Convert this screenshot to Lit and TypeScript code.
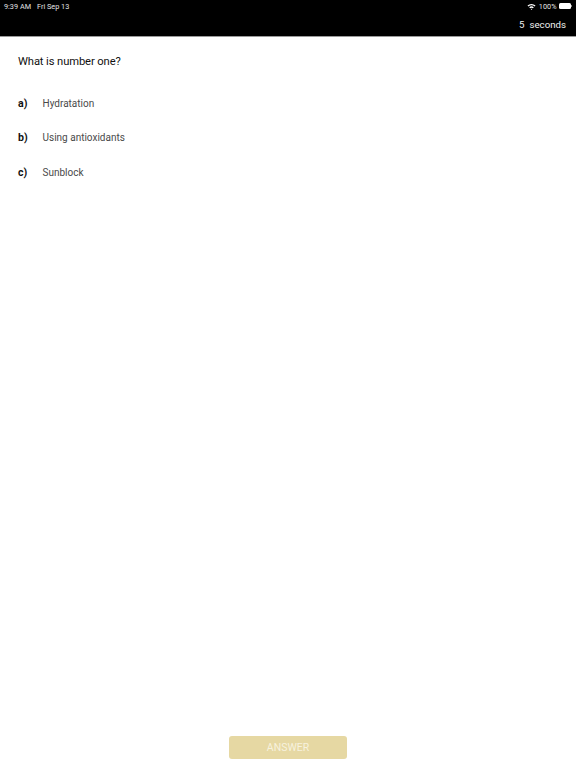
import { LitElement, html, css } from "lit";
import { customElement } from "lit/decorators.js";

const OPTIONS = [
  ["a)", "Hydratation"],
  ["b)", "Using antioxidants"],
  ["c)", "Sunblock"],
];

@customElement("app-root")
export class AppRoot extends LitElement {
  static styles = css`
    :host {
      display: flex;
      flex-direction: column;
      height: 768px;
      background: #fff;
      font-family: Roboto, "Liberation Sans", sans-serif;
      overflow: hidden;
    }
    .header {
      background: #000;
      color: #fff;
      height: 36px;
      border-bottom: 1px solid #9a9a9a;
      box-sizing: content-box;
      display: flex;
      flex-direction: column;
    }
    .status {
      height: 12px;
      display: flex;
      justify-content: space-between;
      align-items: center;
      padding: 0 4px 0 4px;
      font-size: 7.3px;
      color: #e4e4e4;
    }
    .status-left { display: flex; gap: 6px; }
    .status-right { display: flex; align-items: center; gap: 2.5px; }
    .timer {
      display: flex;
      justify-content: flex-end;
      gap: 5px;
      padding: 7px 10px 0 0;
      font-size: 9.7px;
      line-height: 11px;
      color: #f2f2f2;
    }
    .battery { display: flex; align-items: center; }
    .battery-body { width: 12px; height: 6px; background: #fff; border-radius: 1.5px; }
    .battery-tip { width: 1px; height: 2px; background: #888; }
    .main { flex: 1; display: flex; flex-direction: column; padding: 17px 18px 0; }
    .question { font-size: 11.2px; letter-spacing: -0.1px; line-height: 15px; color: #111; margin-bottom: 27px; }
    .options { display: flex; flex-direction: column; gap: 19.4px; }
    .option { display: flex; font-size: 10px; line-height: 15px; color: #4a4a4a; }
    .label { width: 24.5px; font-size: 10.6px; font-weight: 700; color: #111; }
    .footer { display: flex; justify-content: center; padding-bottom: 9px; }
    .answer {
      width: 118px;
      height: 23px;
      border: none;
      border-radius: 3px;
      background: #e6d8a3;
      color: #f7f2de;
      font: inherit;
      font-size: 10.5px;
      padding: 0;
    }
  `;

  render() {
    return html`
      <div class="header">
        <div class="status">
          <div class="status-left"><span>9:39 AM</span><span>Fri Sep 13</span></div>
          <div class="status-right">
            <svg width="9" height="7" viewBox="0 0 18 14" aria-hidden="true">
              <path d="M1 5a12 12 0 0 1 16 0l-1.8 2a9.4 9.4 0 0 0-12.4 0zM4.4 8.6a7 7 0 0 1 9.2 0l-1.8 2a4.4 4.4 0 0 0-5.6 0zM7.4 12a2.6 2.6 0 0 1 3.2 0L9 14z" fill="#fff"></path>
            </svg>
            <span>100%</span>
            <span class="battery"><span class="battery-body"></span><span class="battery-tip"></span></span>
          </div>
        </div>
        <div class="timer"><span>5</span><span>seconds</span></div>
      </div>
      <div class="main">
        <div class="question">What is number one?</div>
        <div class="options">
          ${OPTIONS.map(([l, t]) => html`<div class="option"><span class="label">${l}</span><span>${t}</span></div>`)}
        </div>
      </div>
      <div class="footer"><button class="answer">ANSWER</button></div>
    `;
  }
}
